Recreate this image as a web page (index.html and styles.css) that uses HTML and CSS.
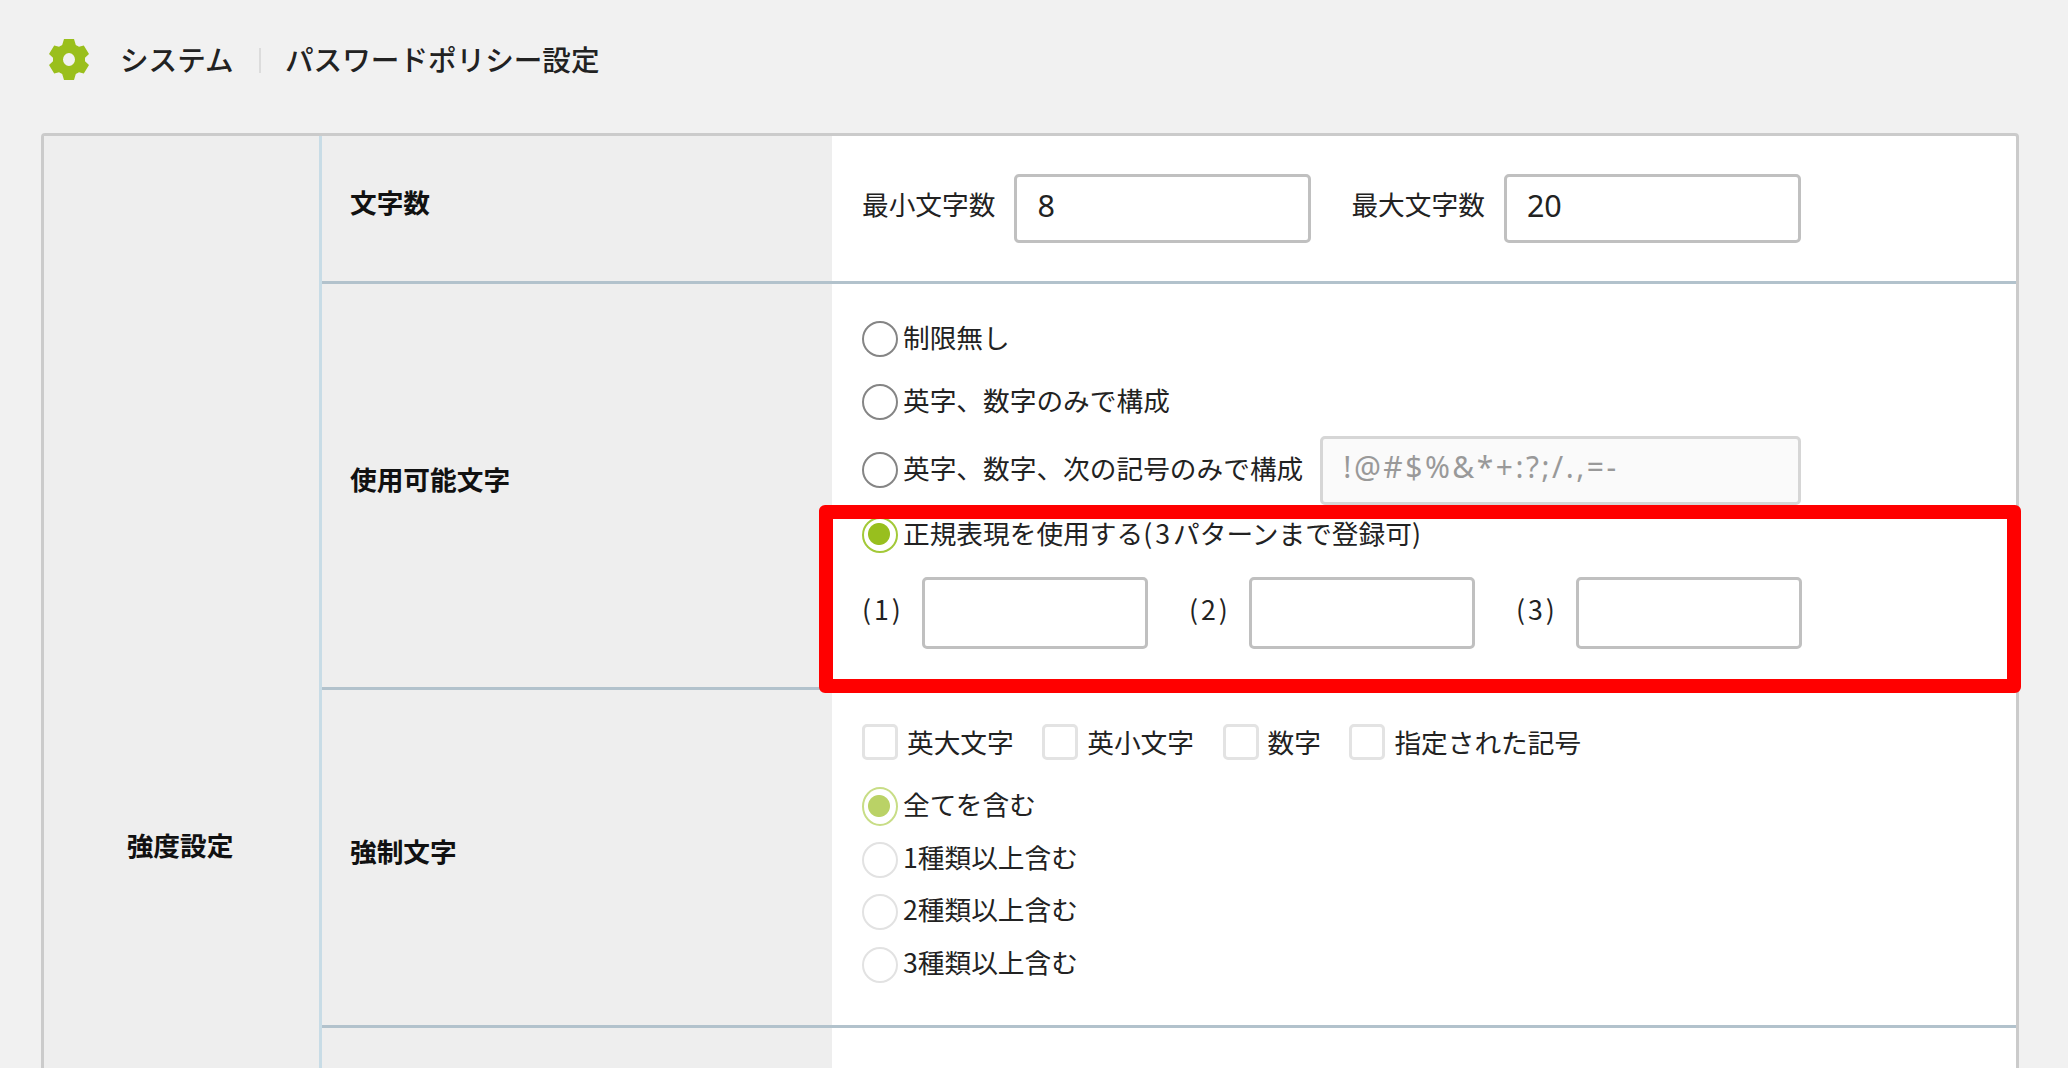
FILE: index.html
```html
<!DOCTYPE html>
<html lang="ja">
<head>
    <meta charset="UTF-8">
    <meta name="viewport" content="width=device-width, initial-scale=1.0">
    <title>パスワードポリシー設定</title>
    <link rel="stylesheet" href="styles.css">
</head>
<body>
    <header class="page-header">
        <svg class="gear" viewBox="0 0 40 41" width="40" height="41">
            <path fill="#9abf1c" fill-rule="evenodd" d="M15 0h10l1.800 6 3.200 1.800 4.800-1.300 5.200 8.500-4 3.700v3.600l4 3.700-5.200 8.500-4.800-1.300-3.200 1.800-1.800 6h-10l-1.800-6-3.200-1.800-4.800 1.300-5.200-8.500 4-3.700v-3.600l-4-3.700 5.200-8.500 4.800 1.300 3.200-1.800zM20 14a6 6.500 0 1 0 0 13a6 6.500 0 1 0 0-13z"/>
        </svg>
        <span class="category">システム</span>
        <span class="divider"></span>
        <h1>パスワードポリシー設定</h1>
    </header>

    <main class="panel">
        <div class="group">強度設定</div>
        <div class="rows">
            <section class="row row-length">
                <div class="label">文字数</div>
                <div class="content">
                    <div class="line fields">
                        <label class="field"><span>最小文字数</span><input class="box number" type="text" value="8"></label>
                        <label class="field"><span>最大文字数</span><input class="box number" type="text" value="20"></label>
                    </div>
                </div>
            </section>

            <section class="row row-chars">
                <div class="label">使用可能文字</div>
                <div class="content">
                    <label class="line any"><input type="radio" name="chars"><span>制限無し</span></label>
                    <label class="line alnum"><input type="radio" name="chars"><span>英字、数字のみで構成</span></label>
                    <div class="line symbols">
                        <label class="line"><input type="radio" name="chars"><span>英字、数字、次の記号のみで構成</span></label>
                        <input class="box symbol" type="text" value="!@#$%&amp;*+:?;/.,=-" disabled>
                    </div>
                    <label class="line regex"><input type="radio" name="chars" checked><span>正規表現を使用する<span class="paren">(3</span>パターンまで登録可)</span></label>
                    <div class="line patterns">
                        <label class="field"><span class="paren">(1)</span><input class="box pattern" type="text"></label>
                        <label class="field"><span class="paren">(2)</span><input class="box pattern" type="text"></label>
                        <label class="field"><span class="paren">(3)</span><input class="box pattern" type="text"></label>
                    </div>
                </div>
                <div class="highlight"></div>
            </section>

            <section class="row row-force">
                <div class="label">強制文字</div>
                <div class="content">
                    <div class="line checks">
                        <label><input type="checkbox" disabled>英大文字</label>
                        <label><input type="checkbox" disabled>英小文字</label>
                        <label><input type="checkbox" disabled>数字</label>
                        <label><input type="checkbox" disabled>指定された記号</label>
                    </div>
                    <label class="line all"><input type="radio" name="force" checked disabled><span>全てを含む</span></label>
                    <label class="line one"><input type="radio" name="force" disabled><span>1種類以上含む</span></label>
                    <label class="line two"><input type="radio" name="force" disabled><span>2種類以上含む</span></label>
                    <label class="line three"><input type="radio" name="force" disabled><span>3種類以上含む</span></label>
                </div>
            </section>

            <section class="row row-next">
                <div class="label"></div>
                <div class="content"></div>
            </section>
        </div>
    </main>
</body>
</html>
```
FILE: styles.css
```css
* {
    box-sizing: border-box;
}

body {
    margin: 0;
    height: 1068px;
    overflow: hidden;
    background-color: #f1f1f1;
    color: #222;
    font-family: "Noto Sans CJK JP", sans-serif;
    font-size: 26.7px;
    line-height: 1.2;
}

/* Header */
.page-header {
    display: flex;
    align-items: center;
    height: 133px;
    padding: 0 0 15px 49px;
    font-size: 28.6px;
    font-weight: 500;
}

.gear {
    margin-right: 31px;
}

.category {
    width: 139px;
}

.divider {
    width: 2px;
    height: 25px;
    margin: 3px 24px 0 0;
    background-color: #dcdcdc;
}

h1 {
    margin: 0;
    font-size: 28.6px;
    font-weight: 500;
}

/* Settings table */
.panel {
    display: flex;
    width: 1978px;
    height: 1424px;
    margin-left: 41px;
    border: 3px solid #cbcbcb;
    border-radius: 4px;
    background-color: #fff;
}

.group {
    display: flex;
    align-items: center;
    justify-content: center;
    width: 278px;
    padding-right: 3px;
    border-right: 3px solid #c8dce6;
    background-color: #eee;
    color: #111;
    font-weight: 700;
}

.rows {
    flex: 1;
}

.row {
    display: flex;
    position: relative;
    border-bottom: 3px solid #b2c2cc;
}

.label {
    display: flex;
    align-items: center;
    width: 510px;
    padding: 0 0 12px 28px;
    background-color: #eee;
    color: #111;
    font-weight: 700;
}

.content {
    flex: 1;
    padding-left: 30px;
}

.row-length {
    height: 148px;
}

.row-chars {
    height: 406px;
}

.row-force {
    height: 338px;
}

.row-next {
    height: 526px;
    border-bottom: 0;
}

.row-length .content {
    padding-top: 38px;
}

.row-chars .content {
    padding-top: 23px;
}

.row-force .content {
    padding-top: 20px;
}

.line {
    display: flex;
    align-items: center;
    white-space: nowrap;
}

.line > span {
    padding-bottom: 4px;
}

.fields {
    gap: 40px;
}

.field {
    display: flex;
    align-items: center;
}

.field > span {
    padding-bottom: 8px;
}

.paren {
    letter-spacing: 3px;
}

/* Inputs */
.box {
    height: 69px;
    padding: 0 20px 7px;
    border: 3px solid #c0c0c0;
    border-radius: 5px;
    background-color: #fff;
    color: #222;
    font-family: "Noto Sans", "Noto Sans CJK JP", sans-serif;
    font-size: 30.5px;
}

.number {
    width: 297px;
    margin-left: 19px;
}

.symbol {
    width: 481px;
    margin-left: 17px;
    border-color: #d6d6d6;
    background-color: #fafafa;
    color: #999;
    font-size: 30px;
    letter-spacing: 2.5px;
}

.pattern {
    width: 226px;
    height: 72px;
}

.patterns .field > .paren {
    width: 60px;
}

.patterns {
    gap: 41px;
    height: 100px;
}

input[type="radio"],
input[type="checkbox"] {
    appearance: none;
    flex: none;
    width: 36px;
    height: 36px;
    margin: 0 5px 0 0;
    border: 2px solid #858585;
    background-color: #fff;
}

input[type="radio"] {
    border-radius: 50%;
}

input[type="radio"]:checked {
    border-color: #a3c938;
    background-image: radial-gradient(circle at 15px 15px, #98bf1e 10.500px, transparent 11.500px);
}

input[type="radio"]:disabled {
    border-color: #e2e2e2;
}

input[type="radio"]:checked:disabled {
    height: 39px;
    border-color: #c8dd86;
    background-image: radial-gradient(circle at 15px 17px, #bad266 10.500px, transparent 11.500px);
}

input[type="checkbox"] {
    margin-right: 9px;
    border: 3px solid #e3e3e3;
    border-radius: 5px;
}

.any {
    height: 64px;
}

.alnum {
    height: 62px;
}

.symbols {
    height: 74px;
}

.regex {
    height: 56px;
}

.checks {
    gap: 28.5px;
    height: 64px;
}

.checks label {
    display: flex;
    align-items: center;
}

.all {
    height: 65px;
}

.one {
    height: 41px;
}

.two {
    height: 63px;
}

.three {
    height: 43px;
}

/* Red frame over the regular expression settings */
.highlight {
    position: absolute;
    top: 221px;
    left: 497px;
    width: 1202px;
    height: 188px;
    border: 14px solid #f00;
    border-radius: 6px;
    z-index: 1;
}
```
